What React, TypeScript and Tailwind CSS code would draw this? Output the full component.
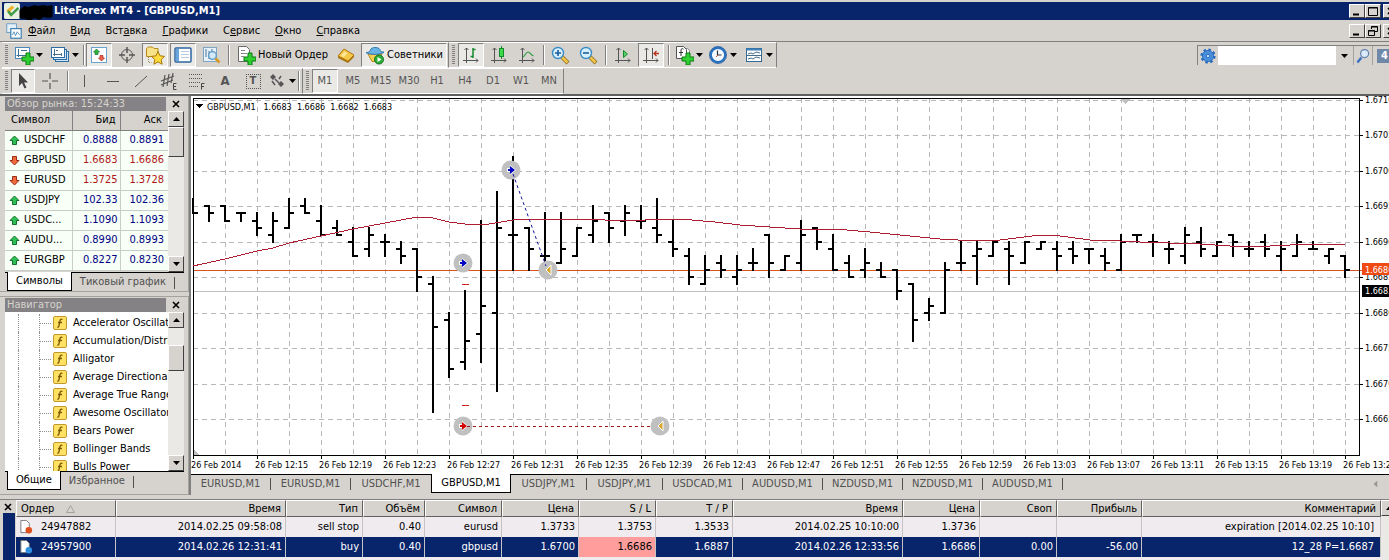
import type { ReactNode } from "react"
import clsx from "clsx"

type Bar = [open: number, high: number, low: number, close: number]

// pips above 1.6600, one bar per minute
const bars: Bar[] = [
  [96, 96, 94, 94], [95, 95, 93, 94], [95, 95, 93, 93], [94, 94, 93, 94], [93, 94, 91, 92],
  [91, 94, 90, 93], [92, 96, 92, 94], [95, 96, 94, 94], [93, 95, 91, 91], [92, 93, 91, 91],
  [90, 92, 88, 88], [89, 92, 88, 91], [90, 91, 88, 90], [89, 90, 87, 88], [89, 89, 83, 85],
  [84, 85, 66, 78], [79, 80, 71, 72], [73, 83, 72, 76], [77, 93, 73, 81], [80, 97, 69, 92],
  [91, 102, 86, 91], [92, 92, 86, 89], [88, 94, 86, 88], [87, 94, 87, 89], [88, 92, 88, 92],
  [91, 95, 90, 93], [94, 94, 90, 92], [93, 95, 91, 94], [93, 95, 92, 93], [92, 96, 90, 91],
  [90, 93, 88, 89], [88, 89, 84, 85], [84, 88, 84, 86], [87, 88, 85, 86], [85, 88, 84, 86],
  [87, 89, 86, 87], [91, 91, 85, 87], [86, 88, 86, 88], [87, 93, 86, 91], [92, 92, 89, 90],
  [89, 91, 86, 86], [87, 88, 85, 85], [86, 89, 85, 87], [86, 87, 85, 85], [86, 86, 82, 83],
  [84, 84, 76, 79], [80, 82, 79, 81], [80, 87, 80, 86], [87, 90, 86, 87], [88, 90, 84, 89],
  [88, 90, 88, 90], [89, 90, 84, 88], [87, 90, 87, 90], [89, 90, 89, 90], [89, 90, 86, 88],
  [89, 90, 87, 88], [89, 89, 87, 89], [88, 89, 86, 87], [86, 91, 86, 90], [91, 91, 90, 91],
  [90, 91, 88, 90], [89, 90, 87, 89], [88, 92, 87, 91], [90, 92, 88, 89], [88, 90, 88, 90],
  [91, 91, 88, 90], [89, 90, 88, 89], [90, 91, 88, 89], [88, 90, 86, 89], [88, 91, 88, 90],
  [89, 90, 89, 89], [88, 89, 87, 89], [88, 88, 85, 86],
]

const movingAverage =
  "0,168 32,161 64,153 80,150 96,145 128,138 160,131 192,125 208,122 224,119 240,120 256,124 272,126 296,126 320,122 352,121 400,121 412,122 452,122 462,121 487,121 522,124 547,127 607,131 642,131 677,134 717,138 747,141 782,143 807,142 847,137 867,138 897,142 927,143 947,144 1007,146 1037,148 1077,148 1097,147 1127,146 1152,147"

const times = [
  "26 Feb 2014", "26 Feb 12:15", "26 Feb 12:19", "26 Feb 12:23", "26 Feb 12:27", "26 Feb 12:31",
  "26 Feb 12:35", "26 Feb 12:39", "26 Feb 12:43", "26 Feb 12:47", "26 Feb 12:51", "26 Feb 12:55",
  "26 Feb 12:59", "26 Feb 13:03", "26 Feb 13:07", "26 Feb 13:11", "26 Feb 13:15", "26 Feb 13:19",
  "26 Feb 13:23",
]

const quotes = [
  { symbol: "USDCHF", bid: "0.8888", ask: "0.8891", up: true },
  { symbol: "GBPUSD", bid: "1.6683", ask: "1.6686", up: false },
  { symbol: "EURUSD", bid: "1.3725", ask: "1.3728", up: false },
  { symbol: "USDJPY", bid: "102.33", ask: "102.36", up: true },
  { symbol: "USDC...", bid: "1.1090", ask: "1.1093", up: true },
  { symbol: "AUDU...", bid: "0.8990", ask: "0.8993", up: true },
  { symbol: "EURGBP", bid: "0.8227", ask: "0.8230", up: true },
]

const indicators = [
  "Accelerator Oscillator", "Accumulation/Distribution", "Alligator", "Average Directional Movement",
  "Average True Range", "Awesome Oscillator", "Bears Power", "Bollinger Bands", "Bulls Power",
]

const menu = [
  ["", "Ф", "айл"], ["", "В", "ид"], ["Вст", "а", "вка"], ["", "Г", "рафики"],
  ["С", "е", "рвис"], ["", "О", "кно"], ["", "С", "правка"],
]

const chartTabs = [
  { name: "EURUSD,M1", width: "w-20" },
  { name: "EURUSD,M1", width: "w-20" },
  { name: "USDCHF,M1", width: "w-20" },
  { name: "GBPUSD,M1", width: "w-20", active: true },
  { name: "USDJPY,M1", width: "w-[76px]" },
  { name: "USDJPY,M1", width: "w-[76px]" },
  { name: "USDCAD,M1", width: "w-20" },
  { name: "AUDUSD,M1", width: "w-20" },
  { name: "NZDUSD,M1", width: "w-20" },
  { name: "NZDUSD,M1", width: "w-20" },
  { name: "AUDUSD,M1", width: "w-20" },
]

const orderColumns = [
  { title: "Ордер", width: "w-[100px]" },
  { title: "Время", width: "w-[170px]" },
  { title: "Тип", width: "w-[77px]" },
  { title: "Объём", width: "w-[62px]" },
  { title: "Символ", width: "w-[77px]" },
  { title: "Цена", width: "w-[77px]" },
  { title: "S / L", width: "w-[77px]" },
  { title: "T / P", width: "w-[77px]" },
  { title: "Время", width: "w-[170px]" },
  { title: "Цена", width: "w-[77px]" },
  { title: "Своп", width: "w-[77px]" },
  { title: "Прибыль", width: "w-[85px]" },
  { title: "Комментарий", width: "" },
]

const orders = [
  ["24947882", "2014.02.25 09:58:08", "sell stop", "0.40", "eurusd", "1.3733", "1.3753", "1.3533", "2014.02.25 10:10:00", "1.3736", "", "", "expiration [2014.02.25 10:10]"],
  ["24957900", "2014.02.26 12:31:41", "buy", "0.40", "gbpusd", "1.6700", "1.6686", "1.6887", "2014.02.26 12:33:56", "1.6686", "0.00", "-56.00", "12_28 P=1.6687"],
]

const raised = "border border-t-white border-l-white border-r-[#404040] border-b-[#404040] bg-[#d6d3ce]"

/* ---------- icons ---------- */

function Icon({ children, className = "size-5" }: { children: ReactNode; className?: string }) {
  return (
    <svg viewBox="0 0 20 20" fill="none" className={clsx("shrink-0", className)} aria-hidden="true">
      {children}
    </svg>
  )
}

const greenPlus = (
  <path d="M12 8h4v4h4v4h-4v4h-4v-4H8v-4h4z" fill="#2fd02f" stroke="#0b7a12" />
)

function NewChartIcon() {
  return (
    <Icon>
      <rect x="1.5" y="2.5" width="14" height="11" fill="#fff" stroke="#4a86b8" />
      <path d="M4.5 4v8M2.5 10.5h11M7 5.5h6" stroke="#3d6f96" />
      {greenPlus}
    </Icon>
  )
}

function ProfilesIcon() {
  return (
    <Icon>
      <rect x="5.5" y="6.5" width="13" height="10" fill="#cfe6f7" stroke="#2d6ca3" />
      <rect x="3.5" y="4.5" width="13" height="10" fill="#cfe6f7" stroke="#2d6ca3" />
      <rect x="1.5" y="2.5" width="13" height="10" fill="#fff" stroke="#2d6ca3" />
      <path d="M4.5 4v7M3 9.5h9M11.5 8v3M6 5.5h2" stroke="#4a6f8c" />
    </Icon>
  )
}

function MarketIcon() {
  return (
    <Icon>
      <rect x="2.5" y="2.5" width="15" height="15" fill="#fff" stroke="#6ba3cf" />
      <path d="M7.500 4l3 3H9v2.500H6V7H4.500z" fill="#2fb63c" stroke="#17752a" strokeWidth=".7" />
      <path d="M12.500 16l-3-3H11v-2.500h3V13h1.500z" fill="#f0624d" stroke="#a8281c" strokeWidth=".7" />
    </Icon>
  )
}

function TargetIcon() {
  return (
    <Icon>
      <circle cx="10" cy="10" r="5.500" stroke="#555" />
      <path d="M10 2v6M10 12v6M2 10h6M12 10h6" stroke="#555" strokeWidth="1.500" />
    </Icon>
  )
}

function NavigatorIcon() {
  return (
    <Icon>
      <path d="M1.500 3.500l2-1.500h4l1.500 1.500h4v8h-11.500z" fill="#f9e38a" stroke="#b68a18" />
      <path d="M13 6.500l2 4.300 4.500.6-3.300 3.200.9 4.600-4.100-2.300-4.100 2.300.9-4.600-3.300-3.200 4.500-.6z" fill="#ffdb3d" stroke="#a8760c" />
      <path d="M3.500 12v5.500h3" stroke="#9b8a55" strokeDasharray="1 1" />
    </Icon>
  )
}

function TerminalIcon() {
  return (
    <Icon>
      <rect x="2" y="3" width="16" height="14" rx="1" fill="#fff" stroke="#2c64a3" strokeWidth="1.500" />
      <rect x="3" y="4" width="3" height="12" fill="#69a5dc" />
      <path d="M8 6.500h8M8 9.500h8M8 12.500h8" stroke="#b6cde1" />
    </Icon>
  )
}

function TesterIcon() {
  return (
    <Icon>
      <rect x="2.500" y="2.500" width="13" height="14" fill="#e6f1f9" stroke="#7fa5c2" />
      <path d="M5 4v8M8 6v8M11 4v4" stroke="#46769b" />
      <circle cx="11.500" cy="10.500" r="3.800" fill="#d3eafa" stroke="#5e98c4" strokeWidth="1.300" />
      <path d="M14.500 13.500l4 4" stroke="#d99a25" strokeWidth="2.500" />
    </Icon>
  )
}

function NewOrderIcon() {
  return (
    <Icon>
      <path d="M2.500 1.500h8l3 3v12h-11z" fill="#fff" stroke="#6b6b6b" />
      <path d="M5 5.500h4M5 8.500h6M5 11.500h3" stroke="#888" />
      {greenPlus}
    </Icon>
  )
}

function EditorIcon() {
  return (
    <Icon>
      <path d="M2 11l6-7 10 6v2l-6 6-10-5z" fill="#a8720f" />
      <path d="M2 11l6-7 10 6-6 6z" fill="#f5c84a" stroke="#b07a12" />
      <path d="M5 10.500l3.500-4 3 1.800-4 4z" fill="#fde79a" />
    </Icon>
  )
}

function AdvisorIcon() {
  return (
    <Icon>
      <path d="M3 9h14l-4 7.500H7z" fill="#f6cf52" stroke="#b78b1d" />
      <path d="M1 7.500c2 2.500 16 2.500 18-.5-3 .5-4-1-4-2.500C13 1.500 6 2 5.500 5 5 7 3 7.500 1 7.500z" fill="#69b4e6" stroke="#2f78ad" />
      <circle cx="14" cy="14.500" r="4.500" fill="#2fae3a" stroke="#137222" />
      <path d="M12.500 12l4 2.500-4 2.500z" fill="#fff" />
    </Icon>
  )
}

const axes = <path d="M5.500 3v15M2 15.500h15M3.500 5l2-2 2 2M15 13.500l2 2-2 2" stroke="#555" />

function BarsIcon() {
  return <Icon>{axes}<path d="M12 3v10M9.500 11.500H12M12 4.500h2.500" stroke="#138a2b" strokeWidth="1.500" /></Icon>
}

function CandlesIcon() {
  return <Icon>{axes}<path d="M12.500 1v13" stroke="#138a2b" /><rect x="10.500" y="3.500" width="4" height="8" fill="#3ddb4b" stroke="#138a2b" /></Icon>
}

function LineIcon() {
  return <Icon>{axes}<path d="M6 12c2-1 3-5 5-5s3 3 5.500 4" stroke="#2f9a3f" strokeWidth="1.200" /></Icon>
}

function AutoScrollIcon() {
  return <Icon>{axes}<path d="M10.500 5.500l4 3.500-4 3.500z" fill="#57d266" stroke="#138a2b" /></Icon>
}

function ShiftIcon() {
  return <Icon>{axes}<path d="M11.500 3v11" stroke="#555" /><path d="M18 8.500h-5M15.500 6l-2.500 2.500 2.500 2.500" stroke="#b5361d" strokeWidth="1.300" /></Icon>
}

function ZoomIcon({ plus }: { plus?: boolean }) {
  return (
    <Icon>
      <path d="M12 12l6 6" stroke="#8d6a1a" strokeWidth="4" />
      <path d="M12 12l5.500 5.500" stroke="#f3c64b" strokeWidth="2.500" />
      <circle cx="8" cy="8" r="5.500" fill="#d7effc" stroke="#3b8cc4" strokeWidth="1.400" />
      <path d={plus ? "M8 5v6M5 8h6" : "M5 8h6"} stroke="#1c5f9e" strokeWidth="1.600" />
    </Icon>
  )
}

function IndicatorsIcon() {
  return (
    <Icon>
      <path d="M5.500 3.500h8l2 2v8h-10z" fill="#fff" stroke="#888" />
      <path d="M2.500 1.500h7l3 3v9h-10z" fill="#fff" stroke="#555" />
      <path d="M9.500 4c-2-1-2.500 0-2.500 2v5M5 7.500h4" stroke="#333" />
      {greenPlus}
    </Icon>
  )
}

function ClockIcon() {
  return (
    <Icon>
      <circle cx="10" cy="10" r="7.300" fill="#f4faff" stroke="#2a72c0" strokeWidth="2.400" />
      <circle cx="10" cy="10" r="8.600" stroke="#1b4f94" strokeWidth=".6" />
      <path d="M9.500 5.500V10h4" stroke="#333" strokeWidth="1.200" />
      <path d="M10 10l-2 2" stroke="#d3502b" />
    </Icon>
  )
}

function TemplatesIcon() {
  return (
    <Icon>
      <rect x="2.500" y="3.500" width="15" height="13" fill="#fff" stroke="#356a96" />
      <path d="M2.500 4.500h15" stroke="#3f7fb8" strokeWidth="2" />
      <path d="M4 9l3-1 2 1 3-2 4 1M4 14l3-1 2 1 3-2 4 1M3 10.500h14" stroke="#466f8c" />
    </Icon>
  )
}

function FlowArrow({ up }: { up: boolean }) {
  return (
    <svg viewBox="0 0 11 11" className={clsx("size-[11px] shrink-0", !up && "rotate-180")} aria-hidden="true">
      <path
        d="M5.500 1l4.500 4.500H7.500V9.500h-4V5.500H1z"
        fill={up ? "#2fc055" : "#f06a3c"}
        stroke={up ? "#10712c" : "#9b2c12"}
      />
    </svg>
  )
}

function SmallArrow({ dir = "down" }: { dir?: "up" | "down" | "left" }) {
  return (
    <svg
      viewBox="0 0 7 4"
      className={clsx("h-1 w-[7px] shrink-0", dir === "up" && "rotate-180", dir === "left" && "rotate-90")}
      aria-hidden="true"
    >
      <path d="M0 0h7L3.500 4z" fill={dir === "left" ? "#9a968e" : "#000"} />
    </svg>
  )
}

function Cross() {
  return (
    <svg viewBox="0 0 8 8" className="size-2 shrink-0" aria-hidden="true">
      <path d="M1 1l6 6M7 1L1 7" stroke="#000" strokeWidth="1.600" />
    </svg>
  )
}

/* ---------- toolbar parts ---------- */

interface ToolProps {
  label: string
  pressed?: boolean
  width?: string
  arrow?: boolean
  children: ReactNode
}

function Tool({ label, pressed, width = "w-7", arrow, children }: ToolProps) {
  return (
    <button type="button" aria-label={label} aria-pressed={pressed} className={clsx("h-full shrink-0 px-px", width)}>
      <span
        className={clsx(
          "flex h-full items-center justify-center gap-0.5 border",
          pressed ? "border-t-[#808080] border-l-[#808080] border-r-white border-b-white bg-[#ebe9e6]" : "border-transparent"
        )}
      >
        {children}
        {arrow && <SmallArrow />}
      </span>
    </button>
  )
}

function Grip() {
  return (
    <div className="flex h-full w-2 shrink-0 items-center justify-center">
      <div className="h-5 w-[3px] bg-[repeating-linear-gradient(#808080_0_1px,#d6d3ce_1px_2px)]" />
    </div>
  )
}

function Separator({ width = "w-[7px]" }: { width?: string }) {
  return (
    <div className={clsx("flex h-full shrink-0 items-center justify-center", width)}>
      <div className="h-5 w-0.5 border-r border-l border-l-[#808080] border-r-white" />
    </div>
  )
}

function ToolGroup({ children }: { children: ReactNode }) {
  return (
    <div className="flex h-full shrink-0 items-center border-t border-r border-b border-t-white border-r-[#808080] border-b-white">
      {children}
    </div>
  )
}

function WindowButtons({ restore }: { restore?: boolean }) {
  const box = clsx("flex h-3.5 w-4 shrink-0 items-center justify-center", raised)
  return (
    <div className="ml-auto flex w-10 shrink-0 overflow-hidden">
      <button type="button" aria-label="Свернуть" className={box}>
        <svg viewBox="0 0 10 10" className="size-2.5"><path d="M1 8.500h6" stroke="#000" strokeWidth="2" /></svg>
      </button>
      <button type="button" aria-label="Развернуть" className={box}>
        <svg viewBox="0 0 10 10" className="size-2.5" fill="none" stroke="#000">
          {restore ? <path d="M3.500 3V.500h6v5H7M.500 4.500h6v5h-6zM.500 5h6M3.500 1h6" /> : <path d="M.500 1.500h9v8h-9zM.500 2h9" />}
        </svg>
      </button>
      <button type="button" aria-label="Закрыть" className={clsx("ml-0.5", box)}><Cross /></button>
    </div>
  )
}

function ScrollBar({ thumb }: { thumb: string }) {
  return (
    <div className="flex w-4 shrink-0 flex-col bg-[#ebe9e6]">
      <button type="button" aria-label="Вверх" className={clsx("flex h-4 shrink-0 items-center justify-center", raised)}>
        <SmallArrow dir="up" />
      </button>
      <div className="flex-1">
        <div className={clsx(raised, thumb)} />
      </div>
      <button type="button" aria-label="Вниз" className={clsx("flex h-4 shrink-0 items-center justify-center", raised)}>
        <SmallArrow />
      </button>
    </div>
  )
}

function PanelTitle({ children }: { children: ReactNode }) {
  return (
    <div className="flex h-[15px] items-center">
      <h2 className="h-3.5 flex-1 bg-[#848284] px-0.5 leading-[14px] text-[#d6d3ce]">{children}</h2>
      <button type="button" aria-label="Закрыть" className="ml-0.5 flex w-4 justify-center"><Cross /></button>
    </div>
  )
}

function PanelTabs({ active, other }: { active: string; other: string }) {
  return (
    <div className="flex h-[19px] border-t border-black">
      <button type="button" className="-mt-px ml-0.5 border-r border-b border-l border-black bg-white px-2">{active}</button>
      <button type="button" className="px-2 text-[#505050]">{other}</button>
      <span className="mt-1 h-3 border-l border-[#505050]" />
    </div>
  )
}

/* ---------- chart ---------- */

const priceY = (pips: number) => Math.floor(73.4 + (100 - pips) * 7.09)

function Marker({ x, y, kind }: { x: number; y: number; kind: "buy" | "sell" | "close" }) {
  return (
    <g transform={`translate(${x} ${y})`}>
      <circle r="9.500" fill="#c0c0c0" />
      {kind === "close" ? (
        <path d="M3-5v10l-5-5z" fill="#d9a62e" stroke="#fff" />
      ) : (
        <>
          <path d="M-4-2h3v-3L5 0l-6 5V2h-3z" fill="#fff" />
          <path d="M-3-1h2v-3L4 0l-5 4V1h-2z" fill={kind === "buy" ? "#0000c0" : "#d00000"} />
        </>
      )}
    </g>
  )
}

// origin of the group is the top left corner of the plot, 1166 x 357
function Chart() {
  const prices = [110, 105, 100, 95, 90, 85, 80, 75, 70, 65]
  return (
    <svg className="block h-[378px] w-full bg-white text-[9px]" role="img" aria-label="График GBPUSD,M1">
      <g transform="translate(2 2)" shapeRendering="crispEdges">
        <g stroke="#b8b8b8" strokeDasharray="5 4">
          {prices.map((p) => (
            <path key={p} d={`M0 ${priceY(p) + 0.5}H1166`} />
          ))}
          {Array.from({ length: 36 }, (_, i) => (
            <path key={i} d={`M${32 * (i + 1) + 0.5} 0V357`} />
          ))}
        </g>
        <path d="M0 193.500H1166" stroke="#c0c0c0" />
        <path d="M0 172.500H1169" stroke="#d8541c" />
        <path d="M927 1h10l-5 5zM0 351l6 6H0z" fill="#c0c0c0" />
        <path d="M0 357V.500H1166.500V357.500H0" fill="none" stroke="#000" />
        <path d="M.500 0V357" stroke="#000" />

        {bars.map(([open, high, low, close], i) => (
          <g key={i} fill="#000">
            <rect x={i * 16 - 1} y={priceY(high) - 1} width="2" height={priceY(low) - priceY(high) + 2} />
            {i > 0 && <rect x={i * 16 - 5} y={priceY(open) - 1} width="5" height="2" />}
            <rect x={i * 16} y={priceY(close) - 1} width="5" height="2" />
          </g>
        ))}
        <path d="M269 186.500h7M269 307.500h7" stroke="#d02020" />
        <polyline points={movingAverage} fill="none" stroke="#b01c30" />

        <g shapeRendering="auto">
          <Marker x={318} y={72} kind="buy" />
          <Marker x={270} y={165} kind="buy" />
          <Marker x={355} y={172} kind="close" />
          <Marker x={270} y={328} kind="sell" />
          <Marker x={467} y={328} kind="close" />
          <path d="M320 76L353 168" stroke="#1010a0" strokeDasharray="3 3" />
        </g>
        <path d="M274 328.500H460" stroke="#a01c1c" strokeDasharray="3 3" />

        {prices.map((p) => (
          <g key={p}>
            <path d={`M1166 ${priceY(p) + 0.5}h4`} stroke="#000" />
            <text x="1172" y={priceY(p) + 3}>{(1.66 + p / 10000).toFixed(4)}</text>
          </g>
        ))}
        <rect x="1169" y="165" width="60" height="12" fill="#f04a14" />
        <text x="1172" y="175" fill="#fff">1.6686</text>
        <rect x="1169" y="187" width="60" height="12" />
        <text x="1172" y="196" fill="#fff">1.6683</text>

        {times.map((t, i) => (
          <g key={t}>
            <path d={`M${64 * i + 0.5} 357v4`} stroke="#000" />
            <text x={64 * i - 2} y="370">{t}</text>
          </g>
        ))}
        <path d="M3 6h7l-3.500 4z" />
        <text x="14" y="12">GBPUSD,M1&nbsp;&nbsp; 1.6683&nbsp; 1.6686&nbsp; 1.6682&nbsp; 1.6683</text>
      </g>
    </svg>
  )
}

/* ---------- page sections ---------- */

function TitleBar() {
  return (
    <header className="mt-0.5 ml-0.5 flex h-[18px] items-center bg-[#08246b] text-white">
      <Icon className="mx-0.5 size-4">
        <rect width="20" height="20" rx="2" fill="#e8f0e4" />
        <path d="M3 9l7-6 3 3-5 4 3 4-3 3z" fill="#f0b12c" />
        <path d="M5 10l4 5 9-9" stroke="#3c9c4a" strokeWidth="3" />
      </Icon>
      <svg viewBox="0 0 35 18" className="-ml-1 h-[18px] w-9 shrink-0" aria-hidden="true">
        <path d="M1 8l5-4 4 1 6-2 4 1 5-1 4 1 5-1v12l-4 1-5-1-4 3-5-2-5 3-4-2-6-1z" fill="#000" />
      </svg>
      <h1 className="font-bold">LiteForex MT4 - [GBPUSD,M1]</h1>
      <WindowButtons />
    </header>
  )
}

function MenuBar() {
  return (
    <nav className="flex h-[21px] items-center pl-1.5">
      <Icon className="mr-1.5 size-4">
        <rect x="1" y="1" width="12" height="11" fill="#e3f0fa" stroke="#5a92bd" />
        <rect x="6" y="7" width="13" height="12" fill="#fff" stroke="#3f7fb0" strokeWidth="1.500" />
        <path d="M8 15l2-4 2 5 2-5 3 4" stroke="#3f7fb0" />
      </Icon>
      <div className="flex gap-[15px]">
        {menu.map(([before, key, after]) => (
          <button type="button" key={before + key + after}>
            {before}
            <span className="underline">{key}</span>
            {after}
          </button>
        ))}
      </div>
      <WindowButtons restore />
    </nav>
  )
}

function MainToolbar() {
  return (
    <div className="flex h-[27px] items-center border-t border-[#808080] pl-0.5">
      <ToolGroup>
        <Grip />
        <Tool label="Новый график" width="w-9" arrow><NewChartIcon /></Tool>
        <Tool label="Профили" width="w-9" arrow><ProfilesIcon /></Tool>
        <Separator width="w-[3px]" />
        <Tool label="Обзор рынка" pressed><MarketIcon /></Tool>
        <Tool label="Окно данных"><TargetIcon /></Tool>
        <Tool label="Навигатор" pressed><NavigatorIcon /></Tool>
        <Tool label="Терминал" pressed><TerminalIcon /></Tool>
        <Tool label="Тестер стратегий"><TesterIcon /></Tool>
        <Separator />
        <Tool label="Новый Ордер" width="w-[100px]"><NewOrderIcon /><span>Новый Ордер</span></Tool>
        <Tool label="Редактор"><EditorIcon /></Tool>
        <Tool label="Советники" width="w-[88px]" pressed><AdvisorIcon /><span>Советники</span></Tool>
      </ToolGroup>
      <ToolGroup>
        <Grip />
        <Tool label="Бары" pressed><BarsIcon /></Tool>
        <Tool label="Свечи"><CandlesIcon /></Tool>
        <Tool label="Линия"><LineIcon /></Tool>
        <Separator width="w-[5px]" />
        <Tool label="Увеличить"><ZoomIcon plus /></Tool>
        <Tool label="Уменьшить"><ZoomIcon /></Tool>
        <Separator />
        <Tool label="Автопрокрутка"><AutoScrollIcon /></Tool>
        <Tool label="Сдвиг графика" pressed><ShiftIcon /></Tool>
        <Separator />
        <Tool label="Индикаторы" width="w-8" arrow><IndicatorsIcon /></Tool>
        <Tool label="Периоды" width="w-9" arrow><ClockIcon /></Tool>
        <Tool label="Шаблоны" width="w-9" arrow><TemplatesIcon /></Tool>
      </ToolGroup>

      <form className="ml-auto flex h-5 shrink-0 border-t border-l border-[#808080]">
        <button type="button" aria-label="Настройки" className="flex w-5 items-center justify-center">
          <Icon className="size-4">
            <circle cx="10" cy="10" r="8" stroke="#2c6fc0" strokeWidth="3" strokeDasharray="3.200 3" />
            <circle cx="10" cy="10" r="7" fill="#4a8fdc" stroke="#1f5fae" />
            <circle cx="10" cy="10" r="2" fill="#d8ecff" stroke="#1f5fae" />
          </Icon>
        </button>
        <input aria-label="Поиск" className="w-[118px] bg-white px-1 outline-none" />
        <button type="button" aria-label="Список" className="flex w-[18px] items-center justify-center border-r border-[#a5a29c]">
          <SmallArrow />
        </button>
        <button type="button" aria-label="Найти" className="flex w-[19px] items-center justify-center border-r border-[#a5a29c]">
          <Icon className="size-4">
            <path d="M8 12l-5 6" stroke="#3b6fc0" strokeWidth="3" />
            <circle cx="12" cy="7" r="5" fill="#dce9f7" stroke="#5f7fae" strokeWidth="1.500" />
          </Icon>
        </button>
        <button type="button" aria-label="Сообщения" className="flex w-4 items-center overflow-hidden pl-1">
          <span className="w-5 shrink-0 bg-[#7088a8] pl-1 text-left font-bold leading-[14px] text-white">4</span>
        </button>
      </form>
    </div>
  )
}

function DrawingToolbar() {
  const frames = ["M1", "M5", "M15", "M30", "H1", "H4", "D1", "W1", "MN"]
  return (
    <div className="flex h-[26px] items-center pl-0.5 text-[#555]">
      <ToolGroup>
        <Grip />
        <Tool label="Курсор" pressed width="w-[26px]">
          <Icon><path d="M6 2v13l3-3 2.500 5.500 2-1L11 11.500h4z" fill="#444" /></Icon>
        </Tool>
        <Tool label="Перекрестие"><Icon><path d="M10 2v6M10 12v6M2 10h6M12 10h6" stroke="#555" strokeWidth="1.200" /></Icon></Tool>
        <Separator />
        <Tool label="Вертикальная линия"><Icon><path d="M9.500 4v12" stroke="#555" /></Icon></Tool>
        <Tool label="Горизонтальная линия"><Icon><path d="M4 10.500h12" stroke="#555" /></Icon></Tool>
        <Tool label="Трендовая линия"><Icon><path d="M4 16L16 5" stroke="#555" /></Icon></Tool>
        <Tool label="Канал">
          <Icon>
            <path d="M2 10L15 5M2 14L14 9M6 4L4 16M10 3L8 15M14 2L12 12" stroke="#555" strokeWidth="1.200" />
            <path d="M17.500 12.500h-3v6h3M14.500 15.500h2.500" stroke="#444" />
          </Icon>
        </Tool>
        <Tool label="Фибоначчи">
          <Icon>
            <path d="M2 3.500h14M2 7.500h14M2 11.500h11M2 15.500h10" stroke="#555" strokeDasharray="1 1" />
            <path d="M17.500 12.500h-3v6M14.500 15.500h2.500" stroke="#444" />
          </Icon>
        </Tool>
        <Tool label="Текст"><span className="text-[13px] font-bold">A</span></Tool>
        <Tool label="Метка">
          <span className="flex size-[15px] items-center justify-center border border-dotted border-[#555] font-bold">T</span>
        </Tool>
        <Tool label="Стрелки" arrow>
          <Icon>
            <path d="M3 6l3-3 3 3-3 3zM11 13l3-3 3 3-3 3z" fill="#555" />
            <path d="M5 10l3 4M8 8l4 4M12 8l2-3" stroke="#555" strokeWidth="1.500" />
          </Icon>
        </Tool>
        <Separator />
      </ToolGroup>
      <ToolGroup>
        <Grip />
        {frames.map((f) => (
          <Tool key={f} label={f} pressed={f === "M1"}><span>{f}</span></Tool>
        ))}
      </ToolGroup>
    </div>
  )
}

function MarketWatch() {
  return (
    <section className="border-r border-b border-[#a5a29c] bg-[#d6d3ce] pl-[5px] pr-1">
      <PanelTitle>Обзор рынка: 15:24:33</PanelTitle>
      <div className="flex h-[161px] overflow-hidden">
        <table className="h-min flex-1 table-fixed border-collapse bg-white">
          <thead>
            <tr className="h-[19px] bg-[#d6d3ce]">
              <th className="w-[67px] border-r border-b border-[#808080] pl-1.5 text-left font-normal">Символ</th>
              <th className="w-12 border-r border-b border-[#808080] pr-1 text-right font-normal">Бид</th>
              <th className="border-b border-[#808080] pr-1.5 text-right font-normal">Аск</th>
            </tr>
          </thead>
          <tbody>
            {quotes.map((q) => (
              <tr key={q.symbol} className={clsx("h-5 bg-[#f7fff7]", q.up ? "text-[#000084]" : "text-[#b01818]")}>
                <td className="border-r border-b border-[#c8ccc8] pl-1 text-black">
                  <div className="flex items-center gap-1"><FlowArrow up={q.up} />{q.symbol}</div>
                </td>
                <td className="border-r border-b border-[#c8ccc8] pr-0.5 text-right">{q.bid}</td>
                <td className="border-b border-[#c8ccc8] pr-1 text-right">{q.ask}</td>
              </tr>
            ))}
          </tbody>
        </table>
        <ScrollBar thumb="h-[30px]" />
      </div>
      <PanelTabs active="Символы" other="Тиковый график" />
    </section>
  )
}

function Navigator() {
  return (
    <section className="mt-1 border-t border-r border-b border-[#a5a29c] bg-[#d6d3ce] pl-[5px] pr-1 pb-1">
      <PanelTitle>Навигатор</PanelTitle>
      <div className="flex h-[159px] overflow-hidden">
        <ul className="min-w-0 flex-1 bg-white pt-0.5">
          {indicators.map((name) => (
            <li key={name} className="flex h-[18px] items-center overflow-hidden whitespace-nowrap">
              <span className="h-full w-3.5 shrink-0 border-r border-dotted border-[#909090]" />
              <span className="h-full w-[21px] shrink-0 border-r border-dotted border-[#909090]" />
              <span className="mr-0.5 w-[11px] shrink-0 border-t border-dotted border-[#909090]" />
              <svg viewBox="0 0 14 14" className="mr-1.5 size-3.5 shrink-0" aria-hidden="true">
                <rect x=".500" y=".500" width="13" height="13" rx="1.500" fill="#ffe263" stroke="#c09a2c" />
                <path d="M9.500 3.500c-1.500-.8-2.300 0-2.600 1.500l-1 5c-.2 1-.8 1.300-1.700 1M5 6.500h4" fill="none" stroke="#7a5a08" strokeWidth="1.300" />
              </svg>
              {name}
            </li>
          ))}
        </ul>
        <ScrollBar thumb="mt-[17px] h-[26px]" />
      </div>
      <PanelTabs active="Общие" other="Избранное" />
    </section>
  )
}

function ChartTabs() {
  return (
    <div className="flex h-[19px] items-stretch border-t border-black">
      {chartTabs.map((tab, i) => (
        <button
          type="button"
          key={i}
          className={clsx(
            "flex shrink-0 items-center",
            tab.width,
            tab.active ? "-mt-px justify-center border-r border-b border-l border-black bg-white" : "text-[#505050]"
          )}
        >
          <span className={clsx("flex-1 text-center", !tab.active && i !== 2 && "border-r border-[#505050] leading-3")}>{tab.name}</span>
        </button>
      ))}
      <button type="button" aria-label="Влево" className="mr-2.5 ml-auto"><SmallArrow dir="left" /></button>
    </div>
  )
}

function OrderIcon({ color }: { color: string }) {
  return (
    <svg viewBox="0 0 14 15" className="size-3.5 shrink-0" aria-hidden="true">
      <path d="M1.500.500h6l3 3v10h-9z" fill="#fff" stroke="#777" />
      <circle cx="10" cy="11" r="3.500" fill={color} />
    </svg>
  )
}

function Terminal() {
  return (
    <section className="mt-1 flex border-t border-[#808080]">
      <div className="flex w-4 shrink-0 flex-col items-center">
        <button type="button" aria-label="Закрыть" className="flex h-[13px] items-center"><Cross /></button>
        <div className="ml-px w-3 flex-1 bg-[#08246b]" />
      </div>
      <table className="min-w-0 flex-1 table-fixed border-separate border-spacing-0 bg-[#efebef]">
        <thead>
          <tr className="h-[17px]">
            {orderColumns.map((c, i) => (
              <th
                key={i}
                className={clsx("border border-t-white border-l-white border-r-[#606060] border-b-[#606060] bg-[#d6d3ce] px-1 font-normal", c.width, i ? "text-right" : "text-left")}
              >
                {c.title}
                {i === 0 && (
                  <svg viewBox="0 0 9 8" className="ml-3 inline h-2 w-[9px]" aria-hidden="true">
                    <path d="M4.500.500l-4 7h8z" fill="none" stroke="#a5a29c" />
                  </svg>
                )}
              </th>
            ))}
          </tr>
        </thead>
        <tbody>
          {orders.map((row, r) => (
            <tr key={row[0]} className={clsx("h-5", r === 1 && "bg-[#08246b] text-white")}>
              {row.map((cell, i) => (
                <td
                  key={i}
                  className={clsx(
                    "border-r border-[#c6c3c6] px-[3px] whitespace-nowrap",
                    i > 0 && "text-right",
                    i === 12 && "pr-1.5",
                    r === 1 && i === 6 && "bg-[#ff9c9c] text-black"
                  )}
                >
                  {i === 0 ? (
                    <div className="flex items-center gap-2">
                      <OrderIcon color={r ? "#2f8fe0" : "#e0501c"} />
                      {cell}
                    </div>
                  ) : (
                    cell
                  )}
                </td>
              ))}
            </tr>
          ))}
          <tr className="h-[3px]">
            <td colSpan={13} />
          </tr>
        </tbody>
      </table>
      <div className="w-2 shrink-0 overflow-hidden bg-[#ebe9e6]">
        <button type="button" aria-label="Вверх" className={clsx("flex h-4 w-4 items-center justify-center", raised)}>
          <SmallArrow dir="up" />
        </button>
      </div>
    </section>
  )
}

export default function App() {
  return (
    <div className="flow-root overflow-hidden bg-[#d6d3ce] font-['DejaVu_Sans_Condensed','Noto_Sans',sans-serif] text-[11px] leading-[14px] text-black">
      <TitleBar />
      <MenuBar />
      <MainToolbar />
      <DrawingToolbar />
      <main className="flex border-t-2 border-[#606060]">
        <div className="w-[189px] shrink-0">
          <MarketWatch />
          <Navigator />
        </div>
        <div className="min-w-0 flex-1 border-l-2 border-[#808080]">
          <Chart />
          <ChartTabs />
        </div>
      </main>
      <Terminal />
    </div>
  )
}
